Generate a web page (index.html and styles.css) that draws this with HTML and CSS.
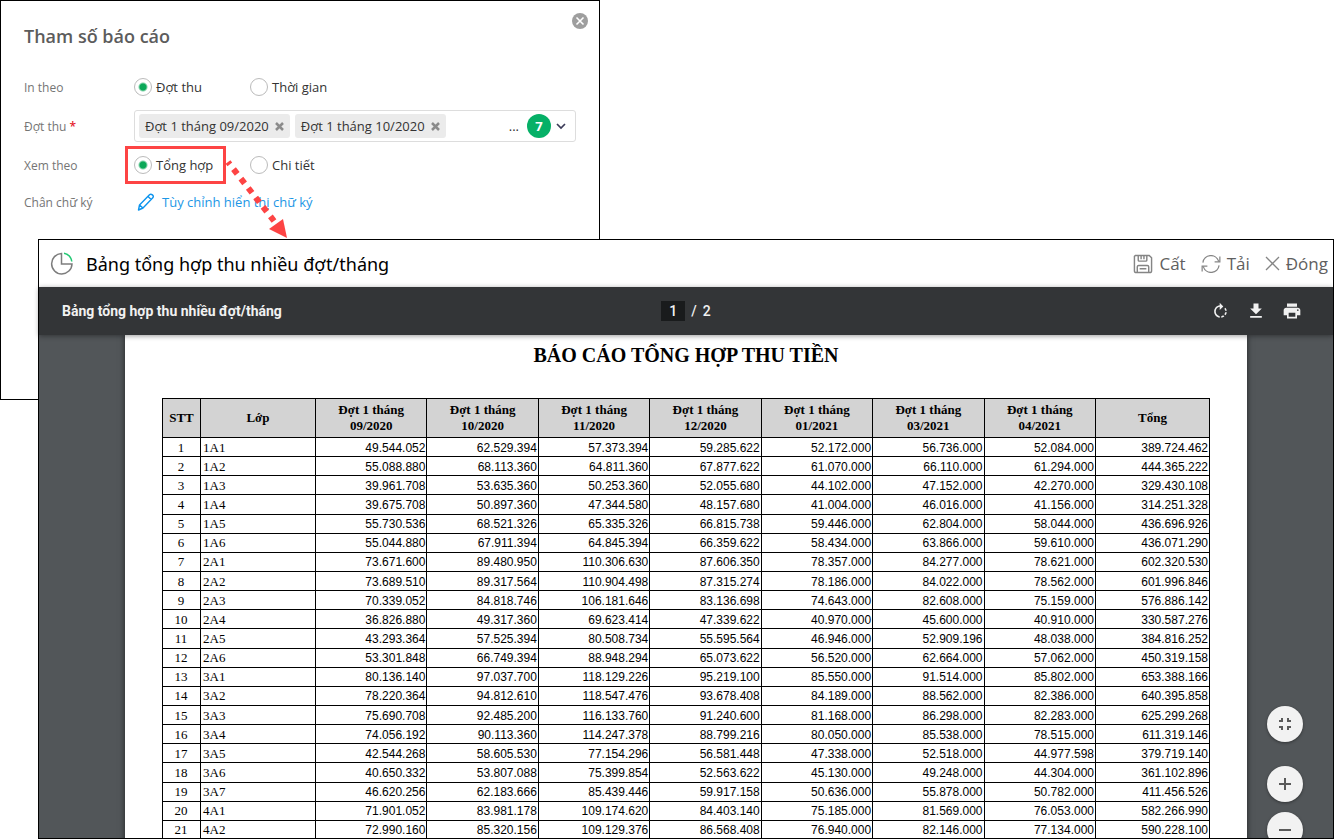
FILE: index.html
```html
<!DOCTYPE html>
<html lang="vi">
<head>
  <meta charset="UTF-8" />
  <meta name="viewport" content="width=device-width, initial-scale=1.0" />
  <title>Bảng tổng hợp thu nhiều đợt/tháng</title>
  <link rel="stylesheet" href="styles.css">
</head>
<body>
  <!-- PARAMETERS DIALOG -->
  <section class="params">
    <header class="params-head">
      <h2>Tham số báo cáo</h2>
      <button class="params-close" type="button" aria-label="Đóng hộp thoại">
        <svg width="16" height="16" viewBox="0 0 16 16"><circle cx="8" cy="8" r="8" fill="#9e9e9e"/><path d="M4.5 4.5l7 7M11.5 4.5l-7 7" stroke="#fff" stroke-width="1.6"/></svg>
      </button>
    </header>

    <form class="fields">
      <div class="field">
        <span class="name">In theo</span>
        <label class="choice"><input type="radio" name="by" checked>Đợt thu</label>
        <label class="choice"><input type="radio" name="by">Thời gian</label>
      </div>
      <div class="field">
        <span class="name">Đợt thu <b>*</b></span>
        <div class="picker">
          <span class="tag">Đợt 1 tháng 09/2020 <button type="button" aria-label="Bỏ 09/2020"><svg width="9" height="9" viewBox="0 0 9 9"><path d="M1 1l7 7M8 1L1 8"/></svg></button></span>
          <span class="tag">Đợt 1 tháng 10/2020 <button type="button" aria-label="Bỏ 10/2020"><svg width="9" height="9" viewBox="0 0 9 9"><path d="M1 1l7 7M8 1L1 8"/></svg></button></span>
          <span class="more">...</span>
          <span class="count">7</span>
          <button class="drop" type="button" aria-label="Mở danh sách"><svg width="10" height="7" viewBox="0 0 10 7"><path d="M1 1l4 4 4-4" fill="none" stroke="#3b3a57" stroke-width="1.7"/></svg></button>
        </div>
      </div>
      <div class="field">
        <span class="name">Xem theo</span>
        <label class="choice marked"><input type="radio" name="view" checked>Tổng hợp</label>
        <label class="choice"><input type="radio" name="view">Chi tiết</label>
      </div>
      <div class="field field-sign">
        <span class="name">Chân chữ ký</span>
        <a class="sign" href="#">
          <svg width="18" height="18" viewBox="0 0 18 18" fill="none" stroke="#0d94ee" stroke-width="1.4" stroke-linejoin="round"><path d="M1.500 17l1-5L12.500 1.800q1.300-1.200 2.900.1t.4 2.900L6 15zM11 3.400l3.200 3M2.500 12L6 15"/></svg>
          Tùy chỉnh hiển thị chữ ký
        </a>
      </div>
    </form>
  </section>

  <!-- ARROW FROM DIALOG TO REPORT -->
  <svg class="arrow" width="66" height="82" viewBox="0 0 66 82">
    <path d="M3 4L49 63" stroke="#fd4444" stroke-width="6" stroke-dasharray="6 6" stroke-dashoffset="3" fill="none"/>
    <path d="M62 80L44 71 58 61z" fill="#fd4444"/>
  </svg>

  <!-- REPORT WINDOW -->
  <main class="report">
    <header class="titlebar">
      <svg width="24" height="24" viewBox="0 0 24 24" fill="none" stroke-width="1.500"><path d="M11.500 1.500A10.200 10.200 0 1 0 22 12H11.500z" stroke="#7d7d7d"/><path d="M14 1.300A10 10 0 0 1 21.800 9.500" stroke="#22c873"/></svg>
      <h1>Bảng tổng hợp thu nhiều đợt/tháng</h1>
      <nav class="actions">
        <button type="button">
          <svg width="20" height="20" viewBox="0 0 21 21" fill="none" stroke="#858585" stroke-width="1.500"><path d="M2.500 1.500H17l2.500 2.500v13.500q0 2-2 2H3.500q-2 0-2-2v-15zM5.500 1.500v5q0 1 1 1h7q1 0 1-1v-5M8.500 1.500v4M11.500 1.500v4M4.500 19.500v-6q0-1.500 1.500-1.500h9q1.500 0 1.500 1.500v6M7 15.500h7"/></svg>
          Cất
        </button>
        <button type="button">
          <svg width="20" height="18" viewBox="0 0 21 18" fill="none" stroke="#858585" stroke-width="1.300"><path d="M2 7.500A8.500 8.500 0 0 1 18.500 6M19.800 1v5.800h-5.500M19 10.500A8.500 8.500 0 0 1 2.500 12M1.200 17v-5.800h5.500"/></svg>
          Tải
        </button>
        <button type="button">
          <svg width="15" height="15" viewBox="0 0 15 15" stroke="#858585" stroke-width="1.300"><path d="M1 1l13 13M14 1L1 14"/></svg>
          Đóng
        </button>
      </nav>
    </header>

    <div class="toolbar">
      <strong class="file">Bảng tổng hợp thu nhiều đợt/tháng</strong>
      <div class="pager"><input type="text" value="1" aria-label="Trang"><span>/</span><span>2</span></div>
      <div class="tools">
        <button type="button" aria-label="Xoay">
          <svg width="19" height="19" viewBox="0 0 24 24"><path d="M15.550 5.550L11 1v3.070C7.060 4.560 4 7.920 4 12s3.050 7.440 7 7.930v-2.020c-2.840-.48-5-2.940-5-5.910s2.160-5.430 5-5.910V10l4.550-4.450zM19.930 11a7.900 7.900 0 0 0-1.620-3.890l-1.420 1.420c.54.75.88 1.600 1.020 2.470h2.020zM13 17.900v2.020a7.920 7.920 0 0 0 3.900-1.610l-1.440-1.440c-.75.54-1.590.89-2.460 1.030zm3.890-2.420l1.420 1.410A7.900 7.900 0 0 0 19.930 13h-2.020a5.900 5.900 0 0 1-1.020 2.480z"/></svg>
        </button>
        <button type="button" aria-label="Tải xuống">
          <svg width="20" height="20" viewBox="0 0 24 24"><path d="M19 9h-4V3H9v6H5l7 7 7-7zM5 18v2h14v-2H5z"/></svg>
        </button>
        <button type="button" aria-label="In">
          <svg width="20" height="20" viewBox="0 0 24 24"><path d="M19 8H5c-1.660 0-3 1.340-3 3v6h4v4h12v-4h4v-6c0-1.660-1.340-3-3-3zm-3 11H8v-5h8v5zm3-7c-.55 0-1-.45-1-1s.45-1 1-1 1 .45 1 1-.45 1-1 1zm-1-9H6v4h12V3z"/></svg>
        </button>
      </div>
    </div>

    <div class="viewer">
      <article class="page">
        <h2>BÁO CÁO TỔNG HỢP THU TIỀN</h2>
        <table>
          <colgroup><col class="c-no"><col class="c-class"><col span="7"><col class="c-sum"></colgroup>
          <thead>
            <tr>
              <th>STT</th><th>Lớp</th>
              <th>Đợt 1 tháng<br>09/2020</th><th>Đợt 1 tháng<br>10/2020</th><th>Đợt 1 tháng<br>11/2020</th><th>Đợt 1 tháng<br>12/2020</th>
              <th>Đợt 1 tháng<br>01/2021</th><th>Đợt 1 tháng<br>03/2021</th><th>Đợt 1 tháng<br>04/2021</th>
              <th>Tổng</th>
            </tr>
          </thead>
          <tbody id="rows"></tbody>
        </table>
      </article>
      <div class="zoom">
        <button type="button" aria-label="Vừa trang"><svg width="12" height="12" viewBox="0 0 12 12"><path d="M0 3h3V0M9 0v3h3M12 9H9v3M3 12V9H0"/></svg></button>
        <button type="button" aria-label="Phóng to"><svg width="12" height="12" viewBox="0 0 12 12"><path d="M6 0v12M0 6h12"/></svg></button>
        <button type="button" aria-label="Thu nhỏ"><svg width="12" height="12" viewBox="0 0 12 12"><path d="M0 6h12"/></svg></button>
      </div>
    </div>
  </main>

  <script>
    // class, seven collection periods, total
    const data = `
1A1 49.544.052 62.529.394 57.373.394 59.285.622 52.172.000 56.736.000 52.084.000 389.724.462
1A2 55.088.880 68.113.360 64.811.360 67.877.622 61.070.000 66.110.000 61.294.000 444.365.222
1A3 39.961.708 53.635.360 50.253.360 52.055.680 44.102.000 47.152.000 42.270.000 329.430.108
1A4 39.675.708 50.897.360 47.344.580 48.157.680 41.004.000 46.016.000 41.156.000 314.251.328
1A5 55.730.536 68.521.326 65.335.326 66.815.738 59.446.000 62.804.000 58.044.000 436.696.926
1A6 55.044.880 67.911.394 64.845.394 66.359.622 58.434.000 63.866.000 59.610.000 436.071.290
2A1 73.671.600 89.480.950 110.306.630 87.606.350 78.357.000 84.277.000 78.621.000 602.320.530
2A2 73.689.510 89.317.564 110.904.498 87.315.274 78.186.000 84.022.000 78.562.000 601.996.846
2A3 70.339.052 84.818.746 106.181.646 83.136.698 74.643.000 82.608.000 75.159.000 576.886.142
2A4 36.826.880 49.317.360 69.623.414 47.339.622 40.970.000 45.600.000 40.910.000 330.587.276
2A5 43.293.364 57.525.394 80.508.734 55.595.564 46.946.000 52.909.196 48.038.000 384.816.252
2A6 53.301.848 66.749.394 88.948.294 65.073.622 56.520.000 62.664.000 57.062.000 450.319.158
3A1 80.136.140 97.037.700 118.129.226 95.219.100 85.550.000 91.514.000 85.802.000 653.388.166
3A2 78.220.364 94.812.610 118.547.476 93.678.408 84.189.000 88.562.000 82.386.000 640.395.858
3A3 75.690.708 92.485.200 116.133.760 91.240.600 81.168.000 86.298.000 82.283.000 625.299.268
3A4 74.056.192 90.113.360 114.247.378 88.799.216 80.050.000 85.538.000 78.515.000 611.319.146
3A5 42.544.268 58.605.530 77.154.296 56.581.448 47.338.000 52.518.000 44.977.598 379.719.140
3A6 40.650.332 53.807.088 75.399.854 52.563.622 45.130.000 49.248.000 44.304.000 361.102.896
3A7 46.620.256 62.183.666 85.439.446 59.917.158 50.636.000 55.878.000 50.782.000 411.456.526
4A1 71.901.052 83.981.178 109.174.620 84.403.140 75.185.000 81.569.000 76.053.000 582.266.990
4A2 72.990.160 85.320.156 109.129.376 86.568.408 76.940.000 82.146.000 77.134.000 590.228.100`;

    document.getElementById('rows').innerHTML = data.trim().split('\n').map((line, i) =>
      `<tr><td>${i + 1}</td>${line.split(' ').map(v => `<td>${v}</td>`).join('')}</tr>`
    ).join('');
  </script>
</body>
</html>
```
FILE: styles.css
```css
:root {
  --ink: #333;
  --muted: #757575;
  --green: #0aa858;
  --red: #fd4444;
  --ui: 'Open Sans', 'Noto Sans', sans-serif;
  --doc: 'Liberation Serif', serif;
}
/* RESET & BASE */
* { margin:0; padding:0; box-sizing:border-box; }
body {
  position:relative; height:100vh; overflow:hidden;
  background:#fff; color:var(--ink); font-family:var(--ui); font-size:13px;
}
button { background:none; border:0; font:inherit; color:inherit; cursor:pointer; }
svg { display:block; flex:none; }

/* PARAMETERS DIALOG */
.params { width:600px; max-width:100%; min-height:400px; border:1px solid #000; padding:12px 23px; }
.params-head { display:flex; justify-content:space-between; align-items:flex-start; margin-right:-12px; }
.params-head h2 { font-size:18px; line-height:24px; font-weight:600; color:#5c5c5c; padding-top:11px; }
.fields { margin-top:23px; }
.field { display:flex; align-items:center; min-height:32px; margin-bottom:7px; }
.field-sign { margin-top:-2px; }
.name { width:110px; flex:none; font-size:12px; color:var(--muted); }
.name b { color:#e5232e; font-weight:600; }
.choice { display:flex; align-items:center; gap:4px; width:116px; }
.choice input {
  appearance:none; width:18px; height:18px; border:1px solid #bbb; border-radius:50%;
  background:#fff;
}
.choice input:checked { background:radial-gradient(circle, var(--green) 3px, #fff 5px); }
.marked { position:relative; }
.marked::before {
  content:''; position:absolute; top:-10px; bottom:-10px; left:-9px; right:24px;
  border:3px solid var(--red);
}

.picker {
  flex:1; display:flex; align-items:center; gap:5px; height:32px;
  border:1px solid #ddd; border-radius:3px; padding:0 9px 0 4px;
}
.tag {
  display:flex; align-items:center; gap:6px; height:24px; padding:0 6px;
  background:#ebebeb; border-radius:3px; white-space:nowrap;
}
.tag path { stroke:#8b8b8b; stroke-width:2.5; }
.more { margin-left:auto; margin-right:3px; }
.count {
  width:24px; height:24px; border-radius:50%; background:#06b067; color:#fff;
  font-weight:700; line-height:24px; text-align:center;
}

.sign { display:flex; align-items:center; gap:7px; padding-left:3px; color:#1d97e6; text-decoration:none; }

.arrow { position:absolute; left:225px; top:158px; pointer-events:none; z-index:2; }

/* REPORT WINDOW */
.report {
  position:absolute; top:239px; right:0; bottom:0; left:38px;
  display:flex; flex-direction:column; border:1px solid #000; background:#fff;
}
.titlebar { display:flex; align-items:center; height:47px; flex:none; padding:0 5px 0 11px; }
.titlebar h1 { margin-left:12px; font-family:'Noto Sans', sans-serif; font-size:18px; font-weight:400; color:#000; }
.actions { display:flex; gap:15px; margin-left:auto; font-size:17px; color:#606060; }
.actions button { display:flex; align-items:center; gap:6px; }

.toolbar {
  display:grid; grid-template-columns:1fr auto 1fr; align-items:center;
  height:48px; flex:none; padding:0 23px; z-index:1;
  background:#333537; color:#f1f1f1; font-family:Roboto, sans-serif;
  box-shadow:0 1px 5px rgba(0,0,0,.4);
}
.file { font-size:14px; font-weight:700; }
.pager { display:flex; align-items:center; gap:6px; font-size:14px; font-weight:500; }
.pager input {
  width:24px; height:20px; border:0; background:#191b1c; color:inherit;
  font:inherit; text-align:center;
}
.tools { display:flex; justify-content:flex-end; gap:16px; padding-right:8px; }
.tools button { display:flex; align-items:center; justify-content:center; width:20px; height:20px; }
.tools svg { fill:#f1f1f1; }

/* DOCUMENT */
.viewer { position:relative; flex:1; min-height:0; overflow:hidden; background:#525659; padding:0 86px; }
.page {
  min-height:100%; background:#fff; padding:8px 37px;
  box-shadow:0 0 6px rgba(0,0,0,.6); color:#000; font-family:var(--doc);
}
.page h2 { font-size:20px; line-height:24px; text-align:center; margin-bottom:31px; }
table { width:100%; height:442px; table-layout:fixed; border-collapse:collapse; }
.c-no { width:38px; }
.c-class { width:115px; }
.c-sum { width:114px; }
th, td { border:1px solid #000; }
th { height:39px; background:#d3d3d3; font-size:13px; line-height:16px; }
td {
  height:19px; padding:1px 1px 0 0; font-family:'Liberation Sans', sans-serif;
  font-size:12px; line-height:16px; text-align:right;
}
td:nth-child(-n+2) { font-family:var(--doc); font-size:13px; text-align:center; }
td:nth-child(2) { text-align:left; padding-left:2px; }

/* ZOOM BUTTONS */
.zoom { position:absolute; top:371px; right:30px; display:flex; flex-direction:column; gap:10px; }
.zoom button {
  display:flex; align-items:center; justify-content:center; width:36px; height:36px;
  border-radius:50%; background:#f2f2f2; box-shadow:0 1px 3px rgba(0,0,0,.4);
}
.zoom button:first-child { margin-bottom:14px; }
.zoom path { fill:none; stroke:#5a5a5a; stroke-width:2; }
```
